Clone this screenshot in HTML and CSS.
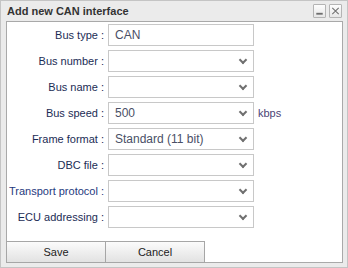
FILE: index.html
```html
<!DOCTYPE html>
<html>
<head>
<meta charset="utf-8">
<link rel="stylesheet" href="styles.css">
</head>
<body>
<div class="window">
  <div class="titlebar">
    <span class="title">Add new CAN interface</span>
    <div class="tools">
      <span class="tool"><svg width="12" height="12" viewBox="0 0 12 12"><rect x="2.5" y="8" width="7" height="2" fill="#6e6e6e"/></svg></span>
      <span class="tool"><svg width="12" height="12" viewBox="0 0 12 12"><path d="M2.5 2.5 L9.5 9.5 M9.5 2.5 L2.5 9.5" stroke="#6e6e6e" stroke-width="1.1" fill="none"/></svg></span>
    </div>
  </div>
  <div class="panel">
    <div class="form">
      <div class="row"><label class="lbl">Bus type :</label><div class="field text">CAN</div></div>
      <div class="row"><label class="lbl">Bus number :</label><div class="field select"><span></span><i class="chev"></i></div></div>
      <div class="row"><label class="lbl">Bus name :</label><div class="field select"><span></span><i class="chev"></i></div></div>
      <div class="row"><label class="lbl">Bus speed :</label><div class="field select"><span>500</span><i class="chev"></i></div><span class="unit">kbps</span></div>
      <div class="row"><label class="lbl">Frame format :</label><div class="field select"><span>Standard (11 bit)</span><i class="chev"></i></div></div>
      <div class="row"><label class="lbl">DBC file :</label><div class="field select"><span></span><i class="chev"></i></div></div>
      <div class="row"><label class="lbl blue">Transport protocol :</label><div class="field select"><span></span><i class="chev"></i></div></div>
      <div class="row"><label class="lbl">ECU addressing :</label><div class="field select"><span></span><i class="chev"></i></div></div>
    </div>
    <div class="buttons">
      <button class="btn">Save</button>
      <button class="btn">Cancel</button>
    </div>
  </div>
</div>
</body>
</html>
```
FILE: styles.css
```css
html, body {
  margin: 0;
  padding: 0;
  background: #ffffff;
}
.window {
  box-sizing: border-box;
  width: 348px;
  height: 268px;
  background: #ebebeb;
  border: 1px solid #c4c4c4;
  display: flex;
  flex-direction: column;
  font-family: "Liberation Sans", Arial, sans-serif;
}
.titlebar {
  height: 20px;
  display: flex;
  align-items: flex-start;
  justify-content: space-between;
  padding: 0 5px 0 6px;
}
.title {
  font-weight: bold;
  font-size: 11px;
  line-height: 13px;
  color: #333333;
  margin-top: 4px;
}
.tools {
  display: flex;
  gap: 3px;
  margin-top: 3px;
}
.tool {
  box-sizing: border-box;
  width: 13px;
  height: 14px;
  border: 1px solid #b4b4b4;
  border-radius: 1px;
  background: linear-gradient(#fdfdfd, #e6e6e6);
  display: flex;
  align-items: center;
  justify-content: center;
}
.tool svg { width: 11px; height: 12px; }
.panel {
  box-sizing: border-box;
  margin: 0 4px 4px 5px;
  flex: 1;
  background: #ffffff;
  border: 1px solid #a9a9a9;
  display: flex;
  flex-direction: column;
  justify-content: space-between;
}
.form {
  display: flex;
  flex-direction: column;
  gap: 4px;
  padding-top: 2px;
}
.row {
  display: flex;
  align-items: center;
  height: 22px;
}
.lbl {
  width: 99px;
  text-align: right;
  font-size: 11px;
  white-space: nowrap;
  color: #1b2c55;
  padding-right: 2px;
  box-sizing: border-box;
}
.lbl.blue { color: #1f3a7e; }
.field {
  box-sizing: border-box;
  width: 146px;
  height: 22px;
  border: 1px solid #c8c8c8;
  display: flex;
  align-items: center;
  padding-left: 6px;
  font-size: 12px;
  color: #4a4f66;
  margin-left: 2px;
}
.select {
  justify-content: space-between;
  padding-right: 6px;
}
.chev {
  width: 4px;
  height: 4px;
  border-right: 2px solid #707070;
  border-bottom: 2px solid #707070;
  transform: rotate(45deg);
  margin-top: -3px;
  margin-right: 1px;
}
.unit {
  font-size: 11px;
  color: #4b4375;
  margin-left: 4px;
}
.buttons {
  display: flex;
  margin-left: -1px;
  margin-bottom: -1px;
}
.btn {
  box-sizing: border-box;
  width: 100px;
  height: 22px;
  border: 1px solid #a6a6a6;
  background: linear-gradient(#fbfbfb, #e2e2e2);
  font-family: "Liberation Sans", Arial, sans-serif;
  font-size: 11px;
  color: #222222;
  padding: 0;
  margin: 0;
}
.btn + .btn {
  border-left: none;
  width: 99px;
}
```
